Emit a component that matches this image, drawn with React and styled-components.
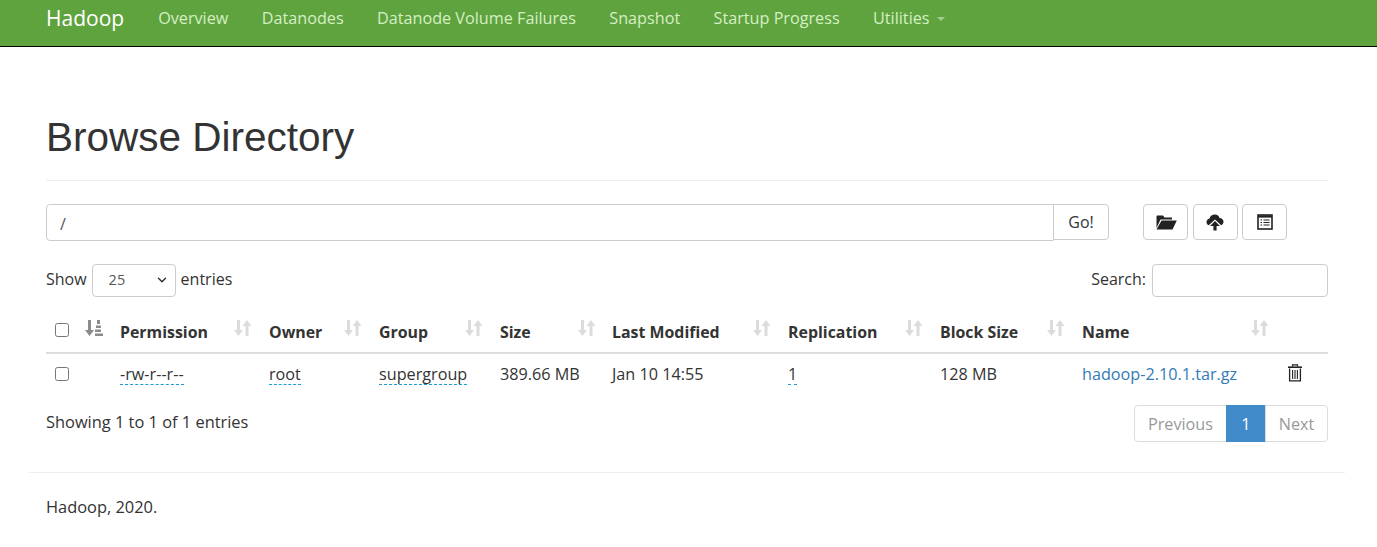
import React from "react";
import styled, { createGlobalStyle } from "styled-components";
import { ChevronDown } from "lucide-react";

const Global = createGlobalStyle`
  * { box-sizing: border-box; }
  html, body { margin: 0; padding: 0; background: #fff; }
  body { font-family: "Open Sans", "Noto Sans", sans-serif; font-size: 16px; line-height: 20px; color: #333; }
`;

const Navbar = styled.nav`
  height: 47px;
  background: #5fa33e;
  border-bottom: 1px solid #000;
  display: flex;
  align-items: center;
  padding: 0 0 11px 46px;
`;
const Brand = styled.a`
  color: #fff;
  font-size: 21px;
  line-height: 36px;
  margin-right: 34px;
`;
const NavLink = styled.a`
  color: #d5efc4;
  font-size: 16.2px;
  line-height: 36px;
  margin-right: 33.4px;
  display: flex;
  align-items: center;
`;
const Caret = styled.span`
  display: inline-block;
  margin-left: 7px;
  margin-top: 2px;
  border-top: 4px solid #a5c995;
  border-left: 4px solid transparent;
  border-right: 4px solid transparent;
`;
const Container = styled.main`
  margin: 0 32px 0 29px;
  padding: 0 17px;
`;
const PageHeader = styled.header`
  height: 134px;
  border-bottom: 1px solid #eee;
  padding-top: 65px;
`;
const Title = styled.h1`
  margin: 0;
  font-family: "Liberation Sans", Arial, sans-serif;
  font-weight: 400;
  font-size: 40.5px;
  line-height: 50px;
  color: #333;
`;
const PathRow = styled.div`
  display: flex;
  margin-top: 23px;
  align-items: flex-start;
`;
const PathInput = styled.div`
  flex: 1;
  height: 37px;
  border: 1px solid #ccc;
  border-radius: 4px 0 0 4px;
  padding: 9px 13px;
  font-size: 16px;
  color: #555;
`;
const GoButton = styled.button`
  width: 56px;
  height: 36px;
  margin-left: -1px;
  border: 1px solid #ccc;
  border-radius: 0 4px 4px 0;
  background: #fff;
  color: #333;
  font: inherit;
  font-size: 16px;
  padding: 0;
`;
const IconGroup = styled.div`
  display: flex;
  gap: 4.5px;
  margin-left: 34px;
  margin-right: 41px;
`;
const IconButton = styled.button`
  width: 45px;
  height: 36px;
  border: 1px solid #ccc;
  border-radius: 4px;
  background: #fff;
  padding: 0;
  display: flex;
  align-items: center;
  justify-content: center;
  color: #222;
`;
const Controls = styled.div`
  display: flex;
  justify-content: space-between;
  align-items: flex-start;
  margin-top: 23px;
  height: 33px;
`;
const Label = styled.label`
  display: flex;
  align-items: flex-start;
  font-size: 16px;
  line-height: 31px;
  gap: 5px;
`;
const Select = styled.div`
  width: 84px;
  height: 33px;
  border: 1px solid #ccc;
  border-radius: 4px;
  display: flex;
  align-items: center;
  justify-content: space-between;
  padding: 0 6px 2px 16px;
  font-size: 14.5px;
  line-height: 20px;
  color: #555;
`;
const SearchBox = styled.div`
  width: 176px;
  height: 33px;
  border: 1px solid #ccc;
  border-radius: 4px;
  margin-left: 1px;
`;
const Table = styled.table`
  width: 100%;
  table-layout: fixed;
  border-collapse: collapse;
  margin-top: 15px;
`;
const Th = styled.th`
  position: relative;
  height: 41px;
  padding: 0 8px;
  text-align: left;
  font-size: 15.9px;
  font-weight: 700;
  color: #333;
  border-bottom: 2px solid #ddd;
  vertical-align: middle;
`;
const Td = styled.td`
  height: 40px;
  padding: 0 8px;
  font-size: 16.2px;
  color: #333;
  vertical-align: middle;
`;
const SortSlot = styled.span`
  position: absolute;
  top: 7px;
  right: ${(p) => p.$right ?? 10}px;
  display: flex;
  color: ${(p) => (p.$active ? "#8c8c8c" : "#dcdcdc")};
`;
const Check = styled.span`
  display: inline-block;
  width: 14px;
  height: 14px;
  border: 1px solid #767676;
  border-radius: 2.5px;
  background: #fff;
  vertical-align: middle;
  margin-left: ${(p) => p.$left}px;
  position: relative;
  top: ${(p) => (p.$raise ? -4 : -1)}px;
`;
const Abbr = styled.span`
  display: inline-block;
  line-height: 20px;
  padding-top: 1px;
  border-bottom: 1px dashed #1a9cd8;
`;
const FileLink = styled.a`
  color: #337ab7;
`;
const TrashWrap = styled.span`
  display: flex;
  color: #222;
  margin-top: -2px;
`;
const Bottom = styled.div`
  display: flex;
  justify-content: space-between;
  align-items: flex-start;
  margin-top: 12px;
`;
const Info = styled.div`
  font-size: 16.4px;
  padding-top: 7px;
`;
const Pagination = styled.div`
  display: flex;
  height: 37px;
  font-size: 16.2px;
`;
const PageItem = styled.span`
  display: flex;
  align-items: center;
  justify-content: center;
  width: ${(p) => p.$w}px;
  border: 1px solid ${(p) => (p.$active ? "#428bca" : "#ddd")};
  background: ${(p) => (p.$active ? "#428bca" : "#fff")};
  color: ${(p) => (p.$active ? "#fff" : "#999")};
  margin-left: ${(p) => (p.$first ? 0 : -1)}px;
  border-radius: ${(p) => (p.$first ? "4px 0 0 4px" : p.$last ? "0 4px 4px 0" : "0")};
`;
const Footer = styled.footer`
  margin: 30px 32px 0 29px;
  border-top: 1px solid #eee;
  padding: 24px 17px 30px;
  font-size: 16.4px;
`;

const Sort = () => (
  <svg width="18" height="18" viewBox="0 0 18 18" fill="currentColor">
    <path d="M3 1h3v10h3l-4.500 6L0 11h3z" />
    <path d="M13 1l4.500 6h-3v10h-3V7h-3z" />
  </svg>
);
const SortAlpha = () => (
  <svg width="18" height="18" viewBox="0 0 18 18" fill="currentColor">
    <path d="M3 1h3v10h3l-4.500 6L0 11h3z" />
    <path d="M12 1h3v4h-3zM11 6.500h5V9h-5zM10 10.500h6V13h-6zM10 14.500h8V17h-8z" />
  </svg>
);
const FolderOpen = () => (
  <svg width="22" height="16" viewBox="0 0 22 16" fill="currentColor">
    <path d="M2 1.500h6l1.500 2H17v2H5.500L1.500 14V2.500z" />
    <path d="M6.500 6.500H21.800L17.500 15.500H1.500z" />
  </svg>
);
const CloudUpload = () => (
  <svg width="18" height="18" viewBox="0 0 18 18" fill="currentColor">
    <path d="M9 1.500c2.400 0 4 1.500 4.500 3.500 2.300.1 4 1.800 4 3.800 0 1.600-1 2.900-2.300 3.400L9 6.500l-6.200 5.700C1.200 11.700.500 10.300.500 9c0-1.800 1.300-3.200 3-3.500C4.200 3 6.300 1.500 9 1.500z" />
    <path d="M9 8l5 5h-3.400v4.500H7.400V13H4z" />
  </svg>
);
const ListAlt = () => (
  <svg width="16" height="16" viewBox="0 0 16 16" fill="none" stroke="currentColor">
    <rect x="1" y="1" width="14" height="14" strokeWidth="1.600" />
    <path d="M1 2.500h14" strokeWidth="2.200" />
    <path d="M3.500 6h1.500M6.500 6h6M3.500 8.500h1.500M6.500 8.500h6M3.500 11h1.500M6.500 11h6" strokeWidth="1.100" />
  </svg>
);
const Trash = () => (
  <svg width="16" height="18" viewBox="0 0 16 18" fill="none" stroke="currentColor">
    <path d="M5.500 2.500V.9h5v1.600" strokeWidth="1.200" />
    <path d="M1 3.200h14" strokeWidth="1.600" />
    <path d="M2.600 4.500v12.400h10.800V4.500" strokeWidth="1.300" />
    <path d="M5.600 6v9M8 6v9M10.400 6v9" strokeWidth="1.100" />
  </svg>
);

const columns = [
  { label: "Permission", width: 149, right: 9 },
  { label: "Owner", width: 110, right: 9 },
  { label: "Group", width: 121, right: 9 },
  { label: "Size", width: 112, right: 8 },
  { label: "Last Modified", width: 176, right: 9 },
  { label: "Replication", width: 152, right: 9 },
  { label: "Block Size", width: 142, right: 9 },
  { label: "Name", width: 205, right: 10 },
];

const navItems = ["Overview", "Datanodes", "Datanode Volume Failures", "Snapshot", "Startup Progress"];

export default function App() {
  return (
    <>
      <Global />
      <Navbar>
        <Brand>Hadoop</Brand>
        {navItems.map((n) => (
          <NavLink key={n}>{n}</NavLink>
        ))}
        <NavLink>
          Utilities<Caret />
        </NavLink>
      </Navbar>
      <Container>
        <PageHeader>
          <Title>Browse Directory</Title>
        </PageHeader>
        <PathRow>
          <PathInput>/</PathInput>
          <GoButton>Go!</GoButton>
          <IconGroup>
            <IconButton aria-label="Create directory"><FolderOpen /></IconButton>
            <IconButton aria-label="Upload"><CloudUpload /></IconButton>
            <IconButton aria-label="Cut"><ListAlt /></IconButton>
          </IconGroup>
        </PathRow>
        <Controls>
          <Label>
            Show
            <Select>
              25
              <ChevronDown size={14} strokeWidth={2.5} color="#333" />
            </Select>
            entries
          </Label>
          <Label>
            Search:
            <SearchBox />
          </Label>
        </Controls>
        <Table>
          <colgroup>
            <col style={{ width: 30 }} />
            <col style={{ width: 36 }} />
            {columns.map((c) => (
              <col key={c.label} style={{ width: c.width }} />
            ))}
            <col />
          </colgroup>
          <thead>
            <tr>
              <Th><Check $left={1} $raise /></Th>
              <Th>
                <SortSlot $active $right={9}><SortAlpha /></SortSlot>
              </Th>
              {columns.map((c) => (
                <Th key={c.label}>
                  {c.label}
                  <SortSlot $right={c.right}><Sort /></SortSlot>
                </Th>
              ))}
              <Th />
            </tr>
          </thead>
          <tbody>
            <tr>
              <Td><Check $left={1} /></Td>
              <Td />
              <Td><Abbr>-rw-r--r--</Abbr></Td>
              <Td><Abbr>root</Abbr></Td>
              <Td><Abbr>supergroup</Abbr></Td>
              <Td>389.66 MB</Td>
              <Td>Jan 10 14:55</Td>
              <Td><Abbr>1</Abbr></Td>
              <Td>128 MB</Td>
              <Td><FileLink>hadoop-2.10.1.tar.gz</FileLink></Td>
              <Td><TrashWrap><Trash /></TrashWrap></Td>
            </tr>
          </tbody>
        </Table>
        <Bottom>
          <Info>Showing 1 to 1 of 1 entries</Info>
          <Pagination>
            <PageItem $first $w={93}>Previous</PageItem>
            <PageItem $active $w={40}>1</PageItem>
            <PageItem $last $w={63}>Next</PageItem>
          </Pagination>
        </Bottom>
      </Container>
      <Footer>Hadoop, 2020.</Footer>
    </>
  );
}
